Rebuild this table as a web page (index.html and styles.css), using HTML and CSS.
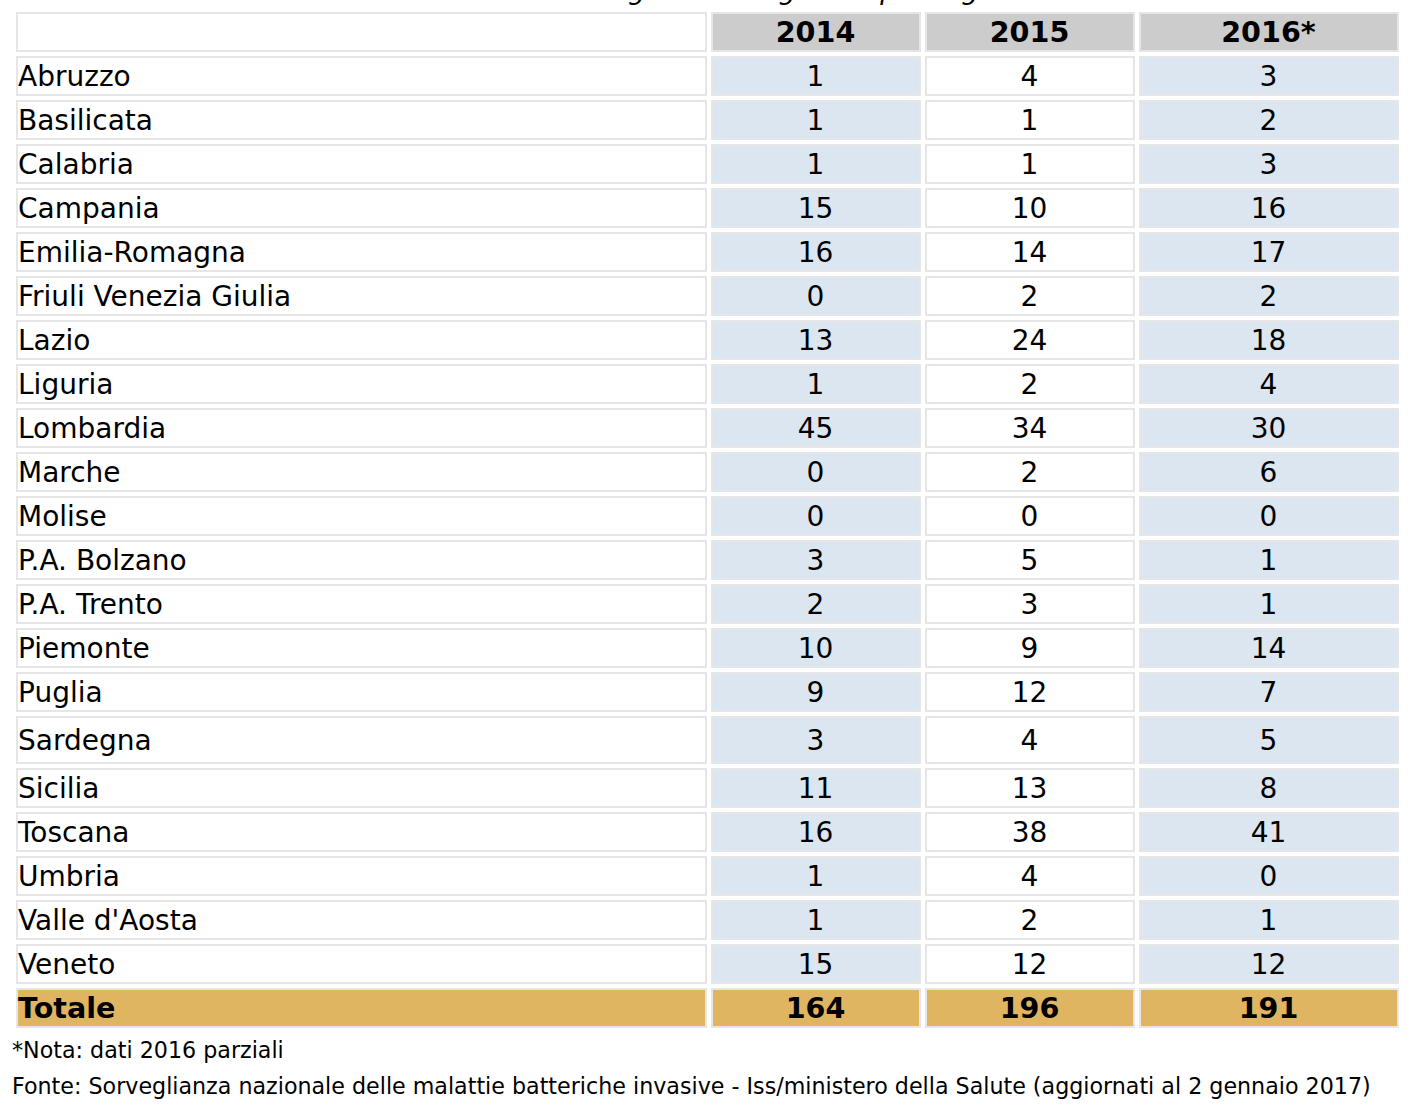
FILE: index.html
```html
<!DOCTYPE html>
<html lang="it">
<head>
<meta charset="utf-8">
<title>Casi per regione</title>
<link rel="stylesheet" href="styles.css">
</head>
<body>
<p class="caption">Tabella 2 - Casi di malattia invasiva da meningococco segnalati per regione e anno di notifica</p>
<table class="data">
  <colgroup>
    <col class="c-region">
    <col class="c-year">
    <col class="c-year">
    <col class="c-year-wide">
  </colgroup>
  <thead>
    <tr>
      <th class="blank"></th>
      <th>2014</th>
      <th>2015</th>
      <th>2016*</th>
    </tr>
  </thead>
  <tbody>
    <tr><td class="reg">Abruzzo</td><td class="b">1</td><td class="w">4</td><td class="b">3</td></tr>
    <tr><td class="reg">Basilicata</td><td class="b">1</td><td class="w">1</td><td class="b">2</td></tr>
    <tr><td class="reg">Calabria</td><td class="b">1</td><td class="w">1</td><td class="b">3</td></tr>
    <tr><td class="reg">Campania</td><td class="b">15</td><td class="w">10</td><td class="b">16</td></tr>
    <tr><td class="reg">Emilia-Romagna</td><td class="b">16</td><td class="w">14</td><td class="b">17</td></tr>
    <tr><td class="reg">Friuli Venezia Giulia</td><td class="b">0</td><td class="w">2</td><td class="b">2</td></tr>
    <tr><td class="reg">Lazio</td><td class="b">13</td><td class="w">24</td><td class="b">18</td></tr>
    <tr><td class="reg">Liguria</td><td class="b">1</td><td class="w">2</td><td class="b">4</td></tr>
    <tr><td class="reg">Lombardia</td><td class="b">45</td><td class="w">34</td><td class="b">30</td></tr>
    <tr><td class="reg">Marche</td><td class="b">0</td><td class="w">2</td><td class="b">6</td></tr>
    <tr><td class="reg">Molise</td><td class="b">0</td><td class="w">0</td><td class="b">0</td></tr>
    <tr><td class="reg">P.A. Bolzano</td><td class="b">3</td><td class="w">5</td><td class="b">1</td></tr>
    <tr><td class="reg">P.A. Trento</td><td class="b">2</td><td class="w">3</td><td class="b">1</td></tr>
    <tr><td class="reg">Piemonte</td><td class="b">10</td><td class="w">9</td><td class="b">14</td></tr>
    <tr><td class="reg">Puglia</td><td class="b">9</td><td class="w">12</td><td class="b">7</td></tr>
    <tr class="tall"><td class="reg">Sardegna</td><td class="b">3</td><td class="w">4</td><td class="b">5</td></tr>
    <tr><td class="reg">Sicilia</td><td class="b">11</td><td class="w">13</td><td class="b">8</td></tr>
    <tr><td class="reg">Toscana</td><td class="b">16</td><td class="w">38</td><td class="b">41</td></tr>
    <tr><td class="reg">Umbria</td><td class="b">1</td><td class="w">4</td><td class="b">0</td></tr>
    <tr><td class="reg">Valle d'Aosta</td><td class="b">1</td><td class="w">2</td><td class="b">1</td></tr>
    <tr><td class="reg">Veneto</td><td class="b">15</td><td class="w">12</td><td class="b">12</td></tr>
  </tbody>
  <tfoot>
    <tr class="total"><td class="reg">Totale</td><td>164</td><td>196</td><td>191</td></tr>
  </tfoot>
</table>
<p class="note">*Nota: dati 2016 parziali</p>
<p class="note source">Fonte: Sorveglianza nazionale delle malattie batteriche invasive - Iss/ministero della Salute (aggiornati al 2 gennaio 2017)</p>
</body>
</html>
```

FILE: styles.css
```css
html, body {
  margin: 0;
  padding: 0;
  background: #ffffff;
  color: #000000;
  font-family: "DejaVu Sans", Verdana, sans-serif;
}

.caption {
  margin: -26px 0 0 14px;
  height: 32px;
  font-size: 27px;
  line-height: 32px;
  font-style: italic;
  white-space: nowrap;
}

.data {
  margin: 2px 0 0 12px;
  border-collapse: separate;
  border-spacing: 4px;
  table-layout: fixed;
  width: 1391px;
  font-size: 28px;
}

.c-region { width: 691px; }
.c-year { width: 210px; }
.c-year-wide { width: 260px; }

.data th,
.data td {
  box-sizing: border-box;
  height: 40px;
  padding: 2px 1px 0 0;
  border: 2px solid #e6e6e6;
  line-height: 34px;
  text-align: center;
  vertical-align: middle;
  white-space: nowrap;
}

.data th {
  padding-top: 0;
  background: #cccccc;
  font-weight: bold;
  font-size: 28.6px;
}

.data th.blank {
  background: #ffffff;
}

.data td.reg {
  text-align: left;
  background: #ffffff;
}

.data td.b {
  background: #dce6f0;
}

.data td.w {
  background: #ffffff;
}

.data tr.tall td {
  height: 48px;
}

.data tr.total td {
  padding-top: 0;
  background: #e0b562;
  font-weight: bold;
  font-size: 28.6px;
}

.note {
  margin: 0 0 0 12px;
  font-size: 22.2px;
  line-height: 36px;
  white-space: nowrap;
}

.note:first-of-type {
  margin-top: 2px;
}
```
